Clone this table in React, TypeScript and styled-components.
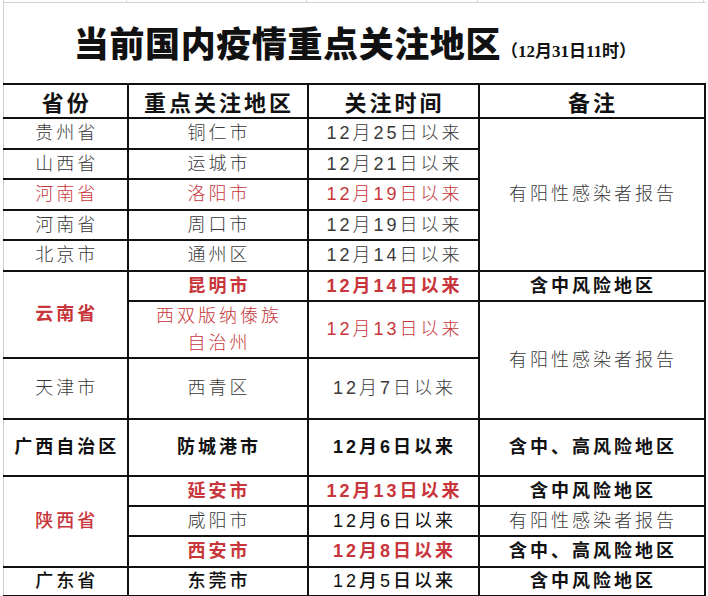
import React from 'react';
import styled, { createGlobalStyle } from 'styled-components';

const GlobalStyle = createGlobalStyle`
  html, body {
    margin: 0;
    padding: 0;
    background: #fff;
  }
  body {
    font-family: 'Liberation Sans', 'Noto Sans CJK SC', sans-serif;
  }
`;

const Page = styled.div`
  width: 708px;
  height: 596px;
  overflow: hidden;
  background: #fff;
`;

const Sheet = styled.div`
  margin-left: 3px;
  width: 702px;
  border-left: 1px solid #cfcfd4;
`;

const GridStrip = styled.div`
  display: grid;
  grid-template-columns: 123px 180px 171px 226px;
  height: 2px;
  border-bottom: 1px solid #cfcfd4;
`;

const GridCell = styled.div`
  border-right: 1px solid #d8d8dc;
`;

const TitleBar = styled.div`
  height: 80px;
  display: flex;
  justify-content: center;
  align-items: baseline;
  line-height: 78px;
`;

const Title = styled.h1`
  margin: 0;
  font-family: 'Noto Sans CJK SC', sans-serif;
  font-size: 35px;
  font-weight: 900;
  letter-spacing: 0.6px;
  color: #111;
`;

const Stamp = styled.span`
  font-family: 'Liberation Serif', 'Noto Sans CJK SC', serif;
  font-size: 17px;
  font-weight: 700;
  color: #111;
`;

const Table = styled.table`
  width: 701px;
  table-layout: fixed;
  border-collapse: collapse;
  margin-left: -1px;
`;

const HeadCell = styled.th`
  height: 32px;
  padding: 0 0 0 3px;
  border: 2px solid #111;
  font-family: 'Noto Sans CJK SC', sans-serif;
  font-size: 22px;
  font-weight: 700;
  letter-spacing: 3px;
  color: #111;
  text-align: center;
  &:first-child {
    border-left: 1px solid #cfcfd4;
  }
`;

type Tone = 'soft' | 'ink' | 'red';

const toneColor: Record<Tone, string> = {
  soft: '#3a3a3a',
  ink: '#111',
  red: '#c8353a',
};

const Cell = styled.td<{ $tone?: Tone; $weight?: number; $lead?: boolean }>`
  padding: 0 0 0 3px;
  border: 2px solid #111;
  font-size: 18px;
  line-height: 27px;
  letter-spacing: 3px;
  text-align: center;
  color: ${(p) => toneColor[p.$tone || 'soft']};
  font-weight: ${(p) => p.$weight || 300};
  white-space: nowrap;
  ${(p) => (p.$lead ? 'border-left: 1px solid #cfcfd4;' : '')}
`;

const Row = styled.tr<{ $h: number }>`
  height: ${(p) => p.$h}px;
`;

export default function App() {
  return (
    <Page>
      <GlobalStyle />
      <Sheet>
        <GridStrip>
          <GridCell />
          <GridCell />
          <GridCell />
          <GridCell />
        </GridStrip>
        <TitleBar>
          <Title>当前国内疫情重点关注地区</Title>
          <Stamp>（12月31日11时）</Stamp>
        </TitleBar>
        <Table>
          <colgroup>
            <col style={{ width: 124 }} />
            <col style={{ width: 180 }} />
            <col style={{ width: 171 }} />
            <col style={{ width: 226 }} />
          </colgroup>
          <thead>
            <tr>
              <HeadCell>省份</HeadCell>
              <HeadCell>重点关注地区</HeadCell>
              <HeadCell>关注时间</HeadCell>
              <HeadCell>备注</HeadCell>
            </tr>
          </thead>
          <tbody>
            <Row $h={31}>
              <Cell $lead>贵州省</Cell>
              <Cell>铜仁市</Cell>
              <Cell>12月25日以来</Cell>
              <Cell rowSpan={5}>有阳性感染者报告</Cell>
            </Row>
            <Row $h={30}>
              <Cell $lead>山西省</Cell>
              <Cell>运城市</Cell>
              <Cell>12月21日以来</Cell>
            </Row>
            <Row $h={31}>
              <Cell $lead $tone="red">河南省</Cell>
              <Cell $tone="red">洛阳市</Cell>
              <Cell $tone="red">12月19日以来</Cell>
            </Row>
            <Row $h={30}>
              <Cell $lead>河南省</Cell>
              <Cell>周口市</Cell>
              <Cell>12月19日以来</Cell>
            </Row>
            <Row $h={31}>
              <Cell $lead>北京市</Cell>
              <Cell>通州区</Cell>
              <Cell>12月14日以来</Cell>
            </Row>
            <Row $h={30}>
              <Cell $lead rowSpan={2} $tone="red" $weight={700}>
                云南省
              </Cell>
              <Cell $tone="red" $weight={700}>昆明市</Cell>
              <Cell $tone="red" $weight={700}>12月14日以来</Cell>
              <Cell $tone="ink" $weight={700}>含中风险地区</Cell>
            </Row>
            <Row $h={57}>
              <Cell $tone="red">
                西双版纳傣族
                <br />
                自治州
              </Cell>
              <Cell $tone="red">12月13日以来</Cell>
              <Cell rowSpan={2}>有阳性感染者报告</Cell>
            </Row>
            <Row $h={61}>
              <Cell $lead>天津市</Cell>
              <Cell>西青区</Cell>
              <Cell>12月7日以来</Cell>
            </Row>
            <Row $h={57}>
              <Cell $lead $tone="ink" $weight={700}>广西自治区</Cell>
              <Cell $tone="ink" $weight={700}>防城港市</Cell>
              <Cell $tone="ink" $weight={700}>12月6日以来</Cell>
              <Cell $tone="ink" $weight={700}>含中、高风险地区</Cell>
            </Row>
            <Row $h={30}>
              <Cell $lead rowSpan={3} $tone="red" $weight={500}>
                陕西省
              </Cell>
              <Cell $tone="red" $weight={700}>延安市</Cell>
              <Cell $tone="red" $weight={700}>12月13日以来</Cell>
              <Cell $tone="ink" $weight={700}>含中风险地区</Cell>
            </Row>
            <Row $h={30}>
              <Cell>咸阳市</Cell>
              <Cell $tone="ink" $weight={400}>12月6日以来</Cell>
              <Cell>有阳性感染者报告</Cell>
            </Row>
            <Row $h={31}>
              <Cell $tone="red" $weight={700}>西安市</Cell>
              <Cell $tone="red" $weight={700}>12月8日以来</Cell>
              <Cell $tone="ink" $weight={700}>含中、高风险地区</Cell>
            </Row>
            <Row $h={28}>
              <Cell $lead $tone="ink" $weight={500}>广东省</Cell>
              <Cell $tone="ink" $weight={500}>东莞市</Cell>
              <Cell $tone="ink" $weight={500}>12月5日以来</Cell>
              <Cell $tone="ink" $weight={700}>含中风险地区</Cell>
            </Row>
          </tbody>
        </Table>
      </Sheet>
    </Page>
  );
}
